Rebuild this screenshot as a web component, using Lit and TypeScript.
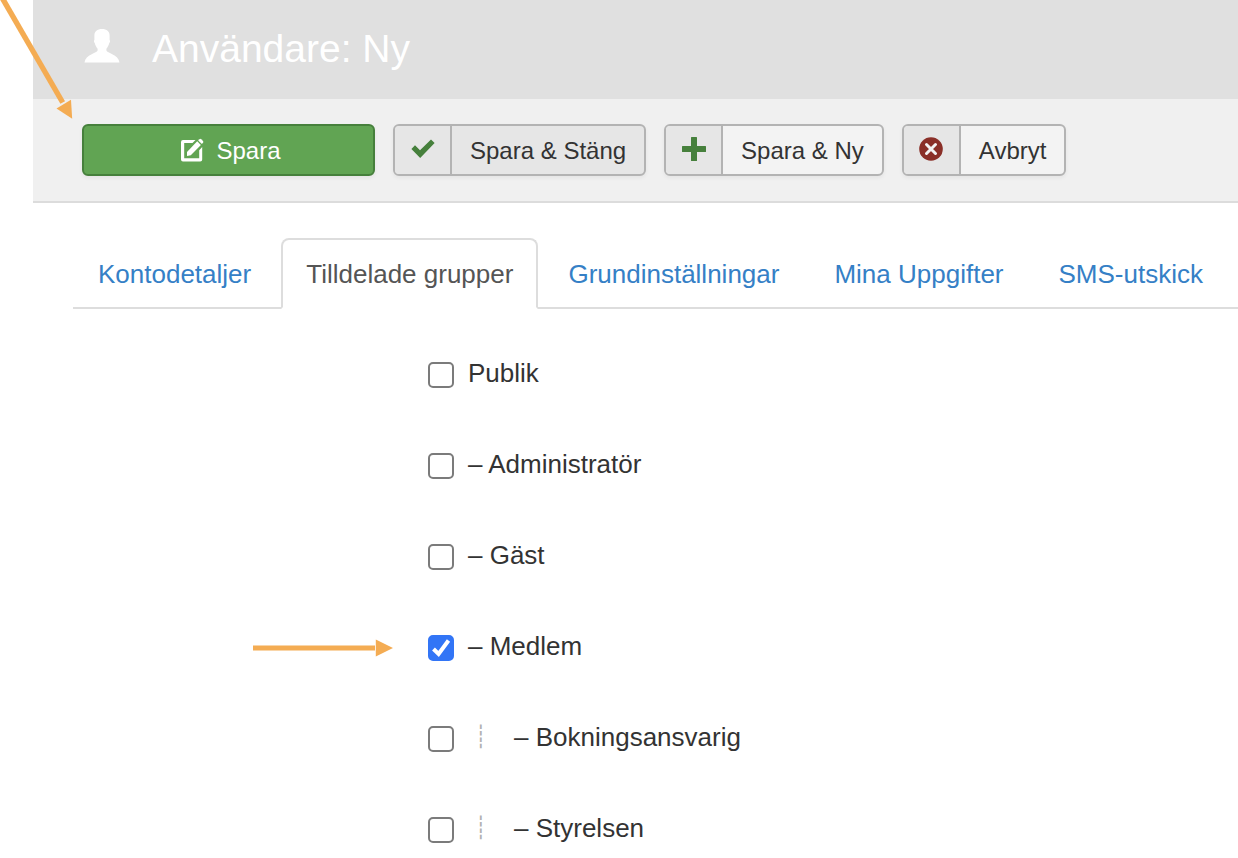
import { LitElement, html, css, svg, nothing } from "lit";
import { customElement, state } from "lit/decorators.js";

interface Group {
  id: string;
  label: string;
  nested: boolean;
  checked: boolean;
  hinted?: boolean;
}

const tabs = [
  "Kontodetaljer",
  "Tilldelade grupper",
  "Grundinställningar",
  "Mina Uppgifter",
  "SMS-utskick",
];

const userIcon = svg`<svg class="icon" width="36" height="34" viewBox="0 0 36 34" aria-hidden="true">
  <path fill="currentColor" d="M18 0C22.800 0 25.600 2.400 25.600 6.500V11C26.300 11.400 26.100 13.400 25.300 14C24.800 16 23.700 18.200 22.400 19.800V21.500C22.800 24 34.500 25.500 35.500 33.500H.5C1.500 25.500 13.200 24 13.600 21.500V19.800C12.300 18.200 11.200 16 10.700 14C9.900 13.400 9.700 11.400 10.400 11V6.500C10.400 2.400 13.200 0 18 0Z"/>
</svg>`;

const editIcon = svg`<svg class="icon" width="24" height="24" viewBox="0 0 24 24" aria-hidden="true">
  <path fill="currentColor" d="M3 2H15.500L12.500 5H4.200V20.200H19.200V12.200L22.200 9V21.500Q22.200 23.500 20.200 23.500H3Q1 23.500 1 21.500V4Q1 2 3 2Z"/>
  <path fill="currentColor" d="M7 18V14L17.200 3.300L20.900 7L10.800 17.200Z"/>
  <path fill="currentColor" d="M18.200 2.400L19.400 1.200Q20.300 .4 21.200 1.200L23 3Q23.700 3.900 23 4.800L21.900 6Z"/>
</svg>`;

const checkIcon = svg`<svg class="icon" width="24" height="20" viewBox="0 0 24 20" aria-hidden="true">
  <path fill="#46803c" d="M.4 10L4 6.300L9 11.200L20 .4L23.600 4L9.200 19Z"/>
</svg>`;

const plusIcon = svg`<svg class="icon" width="24" height="24" viewBox="0 0 24 24" aria-hidden="true">
  <path fill="#46803c" d="M9.600 0H14.400Q15 0 15 .6V9H23.400Q24 9 24 9.600V14.400Q24 15 23.400 15H15V23.400Q15 24 14.400 24H9.600Q9 24 9 23.400V15H.6Q0 15 0 14.400V9.600Q0 9 .6 9H9V.6Q9 0 9.600 0Z"/>
</svg>`;

const cancelIcon = svg`<svg class="icon" width="24" height="24" viewBox="0 0 24 24" aria-hidden="true">
  <circle cx="12" cy="12" r="11.800" fill="#8a2f28"/>
  <path d="M7.500 7.500L16.500 16.500M16.500 7.500L7.500 16.500" stroke="#f3f3f3" stroke-width="3" stroke-linecap="round"/>
</svg>`;

@customElement("app-root")
export class AppRoot extends LitElement {
  @state() private activeTab = 1;

  @state() private groups: Group[] = [
    { id: "public", label: "Publik", nested: false, checked: false },
    { id: "admin", label: "– Administratör", nested: false, checked: false },
    { id: "guest", label: "– Gäst", nested: false, checked: false },
    { id: "member", label: "– Medlem", nested: false, checked: true, hinted: true },
    { id: "booking", label: "– Bokningsansvarig", nested: true, checked: false },
    { id: "board", label: "– Styrelsen", nested: true, checked: false },
  ];

  static styles = css`
    :host {
      display: block;
      position: relative;
      overflow: hidden;
      background: #fff;
      color: #333;
      font-family: "Liberation Sans", Arial, sans-serif;
      font-size: 26px;
      line-height: 36px;
    }
    * {
      box-sizing: border-box;
    }
    .icon {
      display: block;
      flex: none;
    }
    .page {
      margin-left: 33px;
    }
    .header {
      display: flex;
      align-items: center;
      gap: 32px;
      padding: 25px 51px 26px;
      background: #e0e0e0;
      color: #fff;
    }
    .header .icon {
      margin-bottom: 6px;
    }
    .title {
      margin: 0;
      font-size: 39px;
      line-height: 48px;
      font-weight: 400;
    }
    .toolbar {
      display: flex;
      gap: 18px;
      padding: 25px 49px;
      background: #f0f0f0;
      border-bottom: 2px solid #dcdcdc;
    }
    .button {
      display: flex;
      align-items: stretch;
      height: 52px;
      padding: 0;
      border: 2px solid #b3b3b3;
      border-radius: 6px;
      overflow: hidden;
      background: #f3f3f3;
      color: #333;
      font: inherit;
      font-size: 24px;
      white-space: nowrap;
      box-shadow: 0 2px 4px rgba(0, 0, 0, 0.05);
      cursor: pointer;
    }
    .button.active {
      background: #e6e6e6;
    }
    .button.primary {
      flex: 0 0 293px;
      align-items: center;
      justify-content: center;
      gap: 12px;
      padding: 0 0 0 4px;
      border-color: #46803c;
      background: #61a453;
      color: #fff;
    }
    .primary-text {
      padding-top: 2px;
    }
    .button-icon {
      display: flex;
      align-items: center;
      justify-content: center;
      width: 57px;
      padding-bottom: 3px;
      border-right: 2px solid #b3b3b3;
      background: #e6e6e6;
    }
    .button-text {
      align-self: center;
      padding: 2px 18px 0;
    }
    .tabs {
      display: flex;
      gap: 5px;
      margin: 35px 0 0 40px;
      border-bottom: 2px solid #dddddd;
    }
    .tab {
      margin-bottom: -2px;
      padding: 16px 23px 15px;
      border: 2px solid transparent;
      border-radius: 8px 8px 0 0;
      color: #3580c6;
      text-decoration: none;
      white-space: nowrap;
    }
    .tab.active {
      border-color: #dddddd;
      border-bottom-color: #fff;
      background: #fff;
      color: #555;
    }
    .groups {
      display: grid;
      gap: 55px;
      margin: 46px 0 0 40px;
      padding: 0;
      list-style: none;
    }
    .group {
      display: grid;
      grid-template-columns: 320px 35px 26px 1fr;
    }
    .hint {
      justify-self: end;
      margin-top: 11px;
    }
    .box {
      grid-column: 3;
      display: grid;
      align-content: center;
      padding-top: 4px;
    }
    .box > * {
      grid-area: 1 / 1;
    }
    .check {
      appearance: none;
      width: 26px;
      height: 26px;
      margin: 0;
      border: 2px solid #7b7b7b;
      border-radius: 5px;
      background: #fff;
    }
    .check:checked {
      border-color: #3275f6;
      background: #3275f6;
    }
    .tick {
      display: block;
      pointer-events: none;
    }
    .label {
      display: flex;
      padding-left: 14px;
    }
    .guide {
      width: 46px;
      padding-left: 6px;
      color: #b0b0b0;
      font-family: "DejaVu Sans", sans-serif;
      font-size: 22px;
    }
    .pointer {
      position: absolute;
      top: 0;
      left: 0;
      pointer-events: none;
    }
  `;

  private toggle(id: string) {
    this.groups = this.groups.map((g) =>
      g.id === id ? { ...g, checked: !g.checked } : g,
    );
  }

  private selectTab(event: Event, index: number) {
    event.preventDefault();
    this.activeTab = index;
  }

  private renderButton(text: string, icon: unknown, active = false) {
    return html`<button type="button" class="button ${active ? "active" : ""}">
      <span class="button-icon">${icon}</span>
      <span class="button-text">${text}</span>
    </button>`;
  }

  private renderGroup(group: Group) {
    return html`<li class="group">
      ${group.hinted
        ? html`<svg class="hint" width="140" height="18" viewBox="0 0 140 18" aria-hidden="true">
            <path fill="#f4ac53" d="M0 6.500H122V11.500H0ZM122.800 .5L140 9L122.800 17.500Z" />
          </svg>`
        : nothing}
      <span class="box">
        <input
          class="check"
          type="checkbox"
          id=${group.id}
          .checked=${group.checked}
          @change=${() => this.toggle(group.id)}
        />
        ${group.checked
          ? html`<svg class="tick" width="26" height="26" viewBox="0 0 26 26" aria-hidden="true">
              <path d="M5.500 14L10.600 19L20.500 5.500" fill="none" stroke="#fff" stroke-width="4" />
            </svg>`
          : nothing}
      </span>
      <label class="label" for=${group.id}>
        ${group.nested ? html`<span class="guide">┊</span>` : nothing}
        <span>${group.label}</span>
      </label>
    </li>`;
  }

  render() {
    return html`
      <div class="page">
        <header class="header">
          ${userIcon}
          <h1 class="title">Användare: Ny</h1>
        </header>
        <div class="toolbar">
          <button type="button" class="button primary">
            ${editIcon}<span class="primary-text">Spara</span>
          </button>
          ${this.renderButton("Spara & Stäng", checkIcon, true)}
          ${this.renderButton("Spara & Ny", plusIcon)}
          ${this.renderButton("Avbryt", cancelIcon)}
        </div>
        <nav class="tabs">
          ${tabs.map(
            (tab, i) => html`<a
              class="tab ${i === this.activeTab ? "active" : ""}"
              href="#"
              @click=${(e: Event) => this.selectTab(e, i)}
              >${tab}</a
            >`,
          )}
        </nav>
        <ul class="groups">
          ${this.groups.map((group) => this.renderGroup(group))}
        </ul>
      </div>
      <svg class="pointer" width="76" height="122" viewBox="0 0 76 122" aria-hidden="true">
        <path d="M2.200 -2L62.700 102.500" stroke="#f4ac53" stroke-width="5.400" />
        <path fill="#f4ac53" d="M56.500 108.500L71 99.800L72.200 118.800Z" />
      </svg>
    `;
  }
}
